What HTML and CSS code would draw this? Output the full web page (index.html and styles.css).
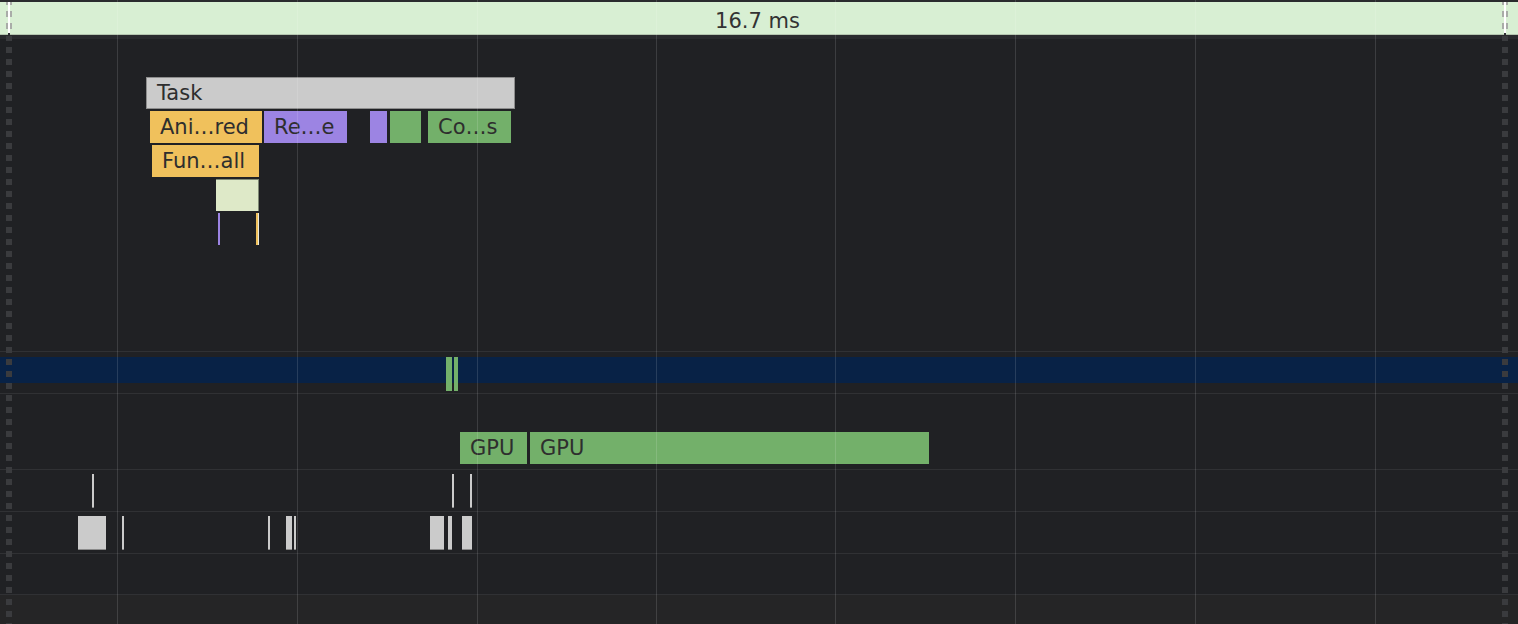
FILE: index.html
```html
<!DOCTYPE html>
<html>
<head>
<meta charset="utf-8">
<title>Performance timeline</title>
<link rel="stylesheet" href="styles.css">
</head>
<body>
<div class="timeline">
  <div class="topline"></div>
  <div class="frames">
    <span class="frame-label">16.7 ms</span>
    <span class="frame-dash frame-dash-left"></span>
    <span class="frame-dash frame-dash-right"></span>
  </div>
  <div class="frames-gap"></div>

  <div class="track track-main">
    <div class="row">
      <div class="bar c-task" style="left:146px;width:369px">Task</div>
    </div>
    <div class="row">
      <div class="bar c-script" style="left:150px;width:112px">Ani…red</div>
      <div class="bar c-render" style="left:264px;width:83px">Re…e</div>
      <div class="bar c-render" style="left:370px;width:17px"></div>
      <div class="bar c-paint" style="left:390px;width:31px"></div>
      <div class="bar c-paint" style="left:428px;width:83px">Co…s</div>
    </div>
    <div class="row">
      <div class="bar c-script" style="left:152px;width:107px">Fun…all</div>
    </div>
    <div class="row">
      <div class="bar c-light" style="left:216px;width:43px"></div>
    </div>
    <div class="row">
      <div class="bar c-render" style="left:218px;width:2px"></div>
      <div class="bar c-script" style="left:256px;width:2px"></div>
      <div class="bar c-white" style="left:258px;width:1px"></div>
    </div>
  </div>

  <div class="track track-raster">
    <div class="band"></div>
    <div class="tick raster-tick c-paint" style="left:446px;width:6px"></div>
    <div class="tick raster-tick c-paint" style="left:454px;width:4px"></div>
  </div>

  <div class="track track-gpu">
    <div class="bar c-paint gpu" style="left:460px;width:67px">GPU</div>
    <div class="bar c-paint gpu" style="left:530px;width:399px">GPU</div>
  </div>

  <div class="track track-marks">
    <div class="tick c-mark" style="left:92px;width:2px"></div>
    <div class="tick c-mark" style="left:452px;width:2px"></div>
    <div class="tick c-mark" style="left:470px;width:2px"></div>
  </div>

  <div class="track track-marks">
    <div class="tick c-mark" style="left:78px;width:28px"></div>
    <div class="tick c-mark" style="left:122px;width:2px"></div>
    <div class="tick c-mark" style="left:268px;width:2px"></div>
    <div class="tick c-mark" style="left:286px;width:6px"></div>
    <div class="tick c-mark" style="left:294px;width:2px"></div>
    <div class="tick c-mark" style="left:430px;width:14px"></div>
    <div class="tick c-mark" style="left:448px;width:4px"></div>
    <div class="tick c-mark" style="left:462px;width:10px"></div>
  </div>

  <div class="track track-empty"></div>
  <div class="footer"></div>

  <div class="grid">
    <span class="gridline" style="left:117px"></span>
    <span class="gridline" style="left:297px"></span>
    <span class="gridline" style="left:477px"></span>
    <span class="gridline" style="left:656px"></span>
    <span class="gridline" style="left:835px"></span>
    <span class="gridline" style="left:1015px"></span>
    <span class="gridline" style="left:1195px"></span>
    <span class="gridline" style="left:1375px"></span>
    <span class="dash dash-left"></span>
    <span class="dash dash-right"></span>
  </div>
</div>
</body>
</html>
```

FILE: styles.css
```css
html, body {
  margin: 0;
  padding: 0;
  background: #202124;
  overflow: hidden;
}

.timeline {
  position: relative;
  width: 1518px;
  height: 624px;
  display: flex;
  flex-direction: column;
  font-family: "DejaVu Sans", "Liberation Sans", sans-serif;
  color: #2e2e2e;
  overflow: hidden;
}

.topline {
  height: 2px;
  flex: none;
  background: #2a2b2e;
}

.frames {
  position: relative;
  flex: none;
  height: 33px;
  box-sizing: border-box;
  padding-top: 6px;
  background: #d8efd3;
  border-bottom: 1px solid #b5c6b0;
  display: flex;
  justify-content: center;
  align-items: center;
  font-size: 21px;
  line-height: 26px;
  color: #333333;
}

.frame-label {
  margin-left: -3px;
}

.frame-dash {
  position: absolute;
  top: 0;
  bottom: -1px;
  width: 6px;
  background-image:
    linear-gradient(to right, transparent 2px, #ffffff 2px, #ffffff 4px, transparent 4px),
    linear-gradient(#a9aca8 0, #a9aca8 6px, transparent 6px);
  background-size: 6px 100%, 6px 12px;
  background-repeat: no-repeat, repeat-y;
  background-position: 0 0, 0 9px;
}

.frame-dash::after {
  content: "";
  position: absolute;
  left: 2px;
  bottom: 0;
  width: 2px;
  height: 2px;
  background: #303134;
}

.frame-dash-left { left: 6px; }
.frame-dash-right { left: 1502px; }

.frames-gap {
  flex: none;
  height: 4px;
  background: #2a2b2e;
}

.track {
  position: relative;
  flex: none;
  border-bottom: 1px solid #303134;
}

.track-main {
  height: 274px;
  padding-top: 38px;
  display: flex;
  flex-direction: column;
}

.row {
  position: relative;
  height: 34px;
  flex: none;
}

.bar {
  position: absolute;
  top: 0;
  height: 32px;
  box-sizing: border-box;
  padding-left: 10px;
  font-size: 21px;
  line-height: 32px;
  white-space: nowrap;
  overflow: hidden;
  color: #2e2e2e;
}

.bar:empty {
  padding-left: 0;
}

.c-task {
  background: #cbcbcb;
  box-shadow: inset 0 0 0 1px #8d8d8d;
  padding-left: 11px;
  line-height: 33px;
}

.c-script { background: #f0c15c; }
.c-render { background: #9c84e3; }
.c-paint { background: #73b06a; }
.c-light {
  background: #dee9c8;
  box-shadow: inset -1px 1px 0 #7f8a76;
}
.c-white { background: #ecebdc; }
.c-mark {
  background: #cbcbcb;
  box-shadow: inset 0 -1px 0 #8a8a8a;
}

.track-raster {
  height: 41px;
}

.band {
  margin-top: 5px;
  height: 26px;
  background: #082246;
}

.tick {
  position: absolute;
  top: 4px;
  height: 34px;
}

.raster-tick {
  top: 5px;
}

.track-gpu {
  height: 75px;
}

.gpu {
  top: 38px;
}

.track-marks {
  height: 41px;
}

.track-empty {
  height: 40px;
}

.footer {
  flex: 1;
  background: #252526;
}

.grid {
  position: absolute;
  inset: 0;
  pointer-events: none;
}

.gridline {
  position: absolute;
  top: 0;
  bottom: 0;
  width: 1px;
  background: rgba(255, 255, 255, 0.13);
}

.dash {
  position: absolute;
  top: 36px;
  bottom: 0;
  width: 6px;
  background-image: linear-gradient(#3a3b3e 0, #3a3b3e 6px, transparent 6px);
  background-size: 6px 12px;
  background-repeat: repeat-y;
  background-position: 0 11px;
}

.dash-left { left: 6px; }
.dash-right { left: 1502px; }
```
